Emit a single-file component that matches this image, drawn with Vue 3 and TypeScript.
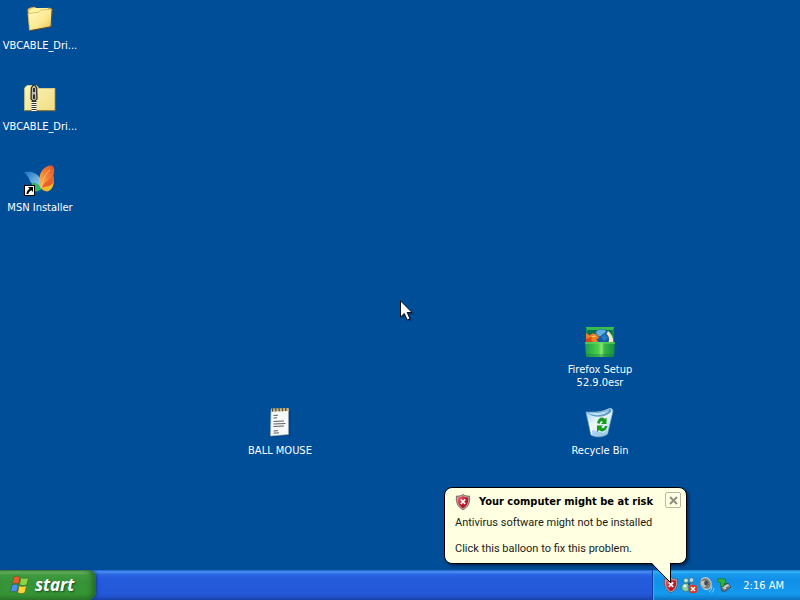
<script setup lang="ts">
import { ref } from 'vue'

type IconKind = 'folder' | 'zip' | 'msn' | 'firefox' | 'bin' | 'notepad'

interface Shortcut {
  kind: IconKind
  label: string
  column: number
  row: number
}

const shortcuts: Shortcut[] = [
  { kind: 'folder', label: 'VBCABLE_Dri...', column: 1, row: 1 },
  { kind: 'zip', label: 'VBCABLE_Dri...', column: 1, row: 2 },
  { kind: 'msn', label: 'MSN Installer', column: 1, row: 3 },
  { kind: 'firefox', label: 'Firefox Setup 52.9.0esr', column: 8, row: 5 },
  { kind: 'notepad', label: 'BALL MOUSE', column: 4, row: 6 },
  { kind: 'bin', label: 'Recycle Bin', column: 8, row: 6 },
]

const balloonOpen = ref(true)
</script>

<template>
  <div class="screen">
    <svg class="defs" width="0" height="0" aria-hidden="true">
      <defs>
        <linearGradient id="gFolder" x1="0" y1="0" x2="1" y2="1">
          <stop offset="0" stop-color="#fffbc4" />
          <stop offset="0.6" stop-color="#fbe88c" />
          <stop offset="1" stop-color="#e5bd58" />
        </linearGradient>
        <linearGradient id="gZip" x1="0" y1="0" x2="1" y2="1">
          <stop offset="0" stop-color="#fdf6b8" />
          <stop offset="1" stop-color="#efdc84" />
        </linearGradient>
        <linearGradient id="gBlueWing" x1="0" y1="0" x2="1" y2="1">
          <stop offset="0" stop-color="#1d6fc0" />
          <stop offset="1" stop-color="#a5dcf5" />
        </linearGradient>
        <linearGradient id="gOrangeWing" x1="0" y1="1" x2="1" y2="0">
          <stop offset="0" stop-color="#ffc24a" />
          <stop offset="0.5" stop-color="#f58232" />
          <stop offset="1" stop-color="#e2502a" />
        </linearGradient>
        <linearGradient id="gBox" x1="0" y1="0" x2="1" y2="0">
          <stop offset="0" stop-color="#1d9c45" />
          <stop offset="0.45" stop-color="#4ed04f" />
          <stop offset="0.55" stop-color="#8be070" />
          <stop offset="0.65" stop-color="#35b548" />
          <stop offset="1" stop-color="#148f45" />
        </linearGradient>
        <linearGradient id="gBin" x1="0" y1="0" x2="1" y2="1">
          <stop offset="0" stop-color="#9fd0ee" />
          <stop offset="0.45" stop-color="#eef9fd" />
          <stop offset="1" stop-color="#a9d3ec" />
        </linearGradient>
        <linearGradient id="gShield" x1="0" y1="0" x2="1" y2="1">
          <stop offset="0" stop-color="#f0767c" />
          <stop offset="0.5" stop-color="#c71a2a" />
          <stop offset="1" stop-color="#96101c" />
        </linearGradient>
        <symbol id="shield" viewBox="0 0 16 16">
          <path d="M8 .5 C10 2 12.500 2.300 14.500 2 C15.300 8 13.500 13 8 15.700 C2.500 13 .7 8 1.500 2 C3.500 2.300 6 2 8 .5Z" fill="#b9aeb0" stroke="#6c4a4e" stroke-width=".8" />
          <path d="M8 2 C9.800 3.200 11.600 3.500 13.200 3.400 C13.600 8.200 12 12 8 14.200 C4 12 2.400 8.200 2.800 3.400 C4.400 3.500 6.200 3.200 8 2Z" fill="url(#gShield)" />
          <path d="M5.800 5.300 L10.200 10 M10.200 5.300 L5.800 10" stroke="#fff" stroke-width="1.800" />
        </symbol>
      </defs>
    </svg>

    <main class="desktop">
      <button
        v-for="(item, index) in shortcuts"
        :key="index"
        type="button"
        class="shortcut"
        :style="{ gridColumn: item.column, gridRow: item.row }"
      >
        <svg class="picture" viewBox="0 0 32 32" aria-hidden="true">
          <g v-if="item.kind === 'folder'">
            <path d="M3.700 8 L4.500 6.500 L8 5.300 L11 5 L13 7 L26.500 6 L26 24 L6 28Z" fill="#efcf73" stroke="#b78a36" stroke-width=".6" />
            <path d="M5 9 L9 6 L24 6 L24 10 L6 13Z" fill="#fff3a4" />
            <path d="M5.500 28.500 L4 11.500 L14.500 10.300 L17 8 L28 7 L27 24.500Z" fill="url(#gFolder)" stroke="#d2a94d" stroke-width=".7" />
            <path d="M5.500 28.800 L27 24.800 L28.200 7.500" fill="none" stroke="#4d4022" stroke-width=".9" />
          </g>
          <g v-else-if="item.kind === 'zip'">
            <path d="M.7 27.500 V5 L3 2.500 H12.500 L15 5.500 H31 V27.500Z" fill="url(#gZip)" stroke="#e8d680" stroke-width=".8" />
            <path d="M1 27.800 H31.300 V6" fill="none" stroke="#66572f" stroke-width="1" />
            <path d="M10 17 V28" stroke="#fff" stroke-width="5" stroke-dasharray="1 1" />
            <path d="M10 18 V28" stroke="#3a3a36" stroke-width="5" stroke-dasharray="1 1" />
            <path d="M7.300 5 Q10 -1 12.700 5 L13 16 Q10 20 7 16Z" fill="#bdbdb5" stroke="#20201c" stroke-width="1.200" />
            <path d="M9 5 H11 V9 H9Z M9 11.500 H11 V16 H9Z" fill="#2e2e2a" />
          </g>
          <g v-else-if="item.kind === 'msn'">
            <path d="M0 8 C6 7 12 8 16 14 C18 18 18 22 17.500 25 C13 23 8 21 6 17 C5 14 3 11 0 8Z" fill="url(#gBlueWing)" />
            <path d="M8 19 C12 18 15 20 17.500 25 C14 28 11 28 9 26Z" fill="#38b56c" />
            <path d="M17 24 C13 15 16 5 24 2 C29 .5 31 3 30 9 C29 15 25 20 17 24Z" fill="url(#gOrangeWing)" />
            <path d="M17 24 C20 18 25 15 29.500 13 C31 20 28 27 23 27.500 C20 27 18 26 17 24Z" fill="#f2b92c" />
            <path d="M17 24 C21 18 25 15 29.700 12 C30.500 18 28.500 21 25 22 C22 22.500 20 23 17 24Z" fill="#e8622a" />
            <path d="M17.500 24 C18 17 21 10 26 6" fill="none" stroke="#ffd59a" stroke-width=".7" />
            <rect x="0" y="21" width="11" height="11" fill="#000" />
            <rect x="1" y="22" width="9" height="9" fill="#fff" />
            <path d="M4 23 H9 V28 L7.300 26.300 C5.500 27.200 4.700 28.500 4.300 30 H2.500 C2.500 27.500 3.500 26 5.700 24.700Z" fill="#000" />
          </g>
          <g v-else-if="item.kind === 'firefox'">
            <rect x="2" y="1" width="28" height="30" rx="1.500" fill="#128a49" />
            <path d="M1.500 1 H30.500 L28 5 H4Z" fill="#38bd4d" />
            <rect x="4" y="4" width="24" height="13" fill="#0d6d56" />
            <circle cx="18" cy="12" r="9" fill="#125aa5" />
            <path d="M12 6 C15 3 19 3 22 5 C21 8 18 8 17 10 C15 11 13 10 12 6Z" fill="#5eaede" />
            <path d="M17 11 L21 8 L24 12 L20 15Z" fill="#247dc2" />
            <path d="M24 5 C28 8 30 13 29 18 H24 C26 13 25 10 22.500 8Z" fill="#f5e6b4" />
            <path d="M2 18 V7 L6 9.500 C8 7 11 7 13 9 L15.500 12 L12.500 13 L15 18Z" fill="#ef7d24" />
            <path d="M2 13 L8 11 L7 14 L11 18 H2Z" fill="#cf4520" />
            <path d="M7 11 L10 9 L12 11Z" fill="#ffd04a" />
            <path d="M1 16 H31 L30 30 Q30 31 29 31 H3 Q2 31 2 30Z" fill="url(#gBox)" />
            <path d="M1 16 H31 V18 H1Z" fill="#65d95e" opacity=".6" />
            <path d="M2 28 H30 V31 H2Z" fill="#096b42" opacity=".3" />
          </g>
          <g v-else-if="item.kind === 'bin'">
            <path d="M2 5 C8 5 17 6 25 1.500 C28 .5 29.500 3 28.500 6 L23.500 27 C20 30 12 31 7 28Z" fill="url(#gBin)" stroke="#7baacb" stroke-width=".7" />
            <path d="M2.500 5.500 C9 5 18 6 25.500 2 C28 2 28 4 26 6 C20 11 9 11 2.500 5.500Z" fill="#5e9ecf" />
            <path d="M3.500 5.800 C10 5.500 18 7 25 3 C21 9 11 9.500 3.500 5.800Z" fill="#c1e2f3" />
            <path d="M4.500 10 L10 28 C8.500 28 7.500 28 7 27Z" fill="#fff" opacity=".7" />
            <path d="M8 23 L20 26 L23 22 L22 28 C17 30 12 30 8 28Z" fill="#78b0d7" opacity=".5" />
            <g fill="#179b1d">
              <path d="M13 16 C14 11 18 9 21 12 L22.500 10.500 V17 H17 L19 15 C17.500 13.500 16 14 15.500 17Z" />
              <path d="M23.500 19 C22 24 18 26 15 23 L13 25 V18.500 H19 L17.300 20.300 C19 22 20.500 21 21 19Z" />
            </g>
          </g>
          <g v-else>
            <path d="M8 4 L25 3 L26.500 4 L26 29 L8 30Z" fill="#07305c" opacity=".45" />
            <path d="M7 3 L24.500 2 L24.500 27.500 L6.500 29Z" fill="#f7f9f7" stroke="#9daab2" stroke-width=".6" />
            <path d="M7 1.500 L24.500 1 V4 L7 4.800Z" fill="#cabb87" />
            <path d="M8 3 L24 2.500" stroke="#4b4532" stroke-width="3" stroke-dasharray="1.200 2.100" />
            <g fill="none" stroke="#586069" stroke-width="1">
              <path d="M9.500 8.500 L14 8.200 M9.500 11 L13 10.800 M9.500 14.500 L20 14 M9.500 17 L21.500 16.500 M9.500 19.500 L20 19 M9.500 24 L14 23.700 M9.500 26.200 L15 25.800" />
            </g>
          </g>
        </svg>
        <span class="caption">{{ item.label }}</span>
      </button>
      <svg class="cursor" viewBox="0 0 14 22" aria-hidden="true">
        <path d="M2 3 V19 L6 15.500 L9 22 L12 20.500 L9 14.500 H14Z" fill="#00204d" opacity=".5" />
        <path d="M.5 .8 V17 L4.300 13.500 L7.200 20 L10 18.800 L7.200 12.500 H12Z" fill="#fff" stroke="#000" stroke-width=".9" />
      </svg>
    </main>

    <footer class="taskbar">
      <button type="button" class="start">
        <svg class="flag" viewBox="0 0 20 20" aria-hidden="true">
          <g stroke="#1c5220" stroke-width=".4">
            <path d="M3.800 2 C6 .7 8 1 10 2 L8.500 9 C6.500 8 4.500 8 2.300 9.200Z" fill="#ee582b" />
            <path d="M11 2.500 C13 3.700 15.500 3.700 18.500 2.500 L16.700 9.700 C13.700 11 11.500 10.800 9.500 9.500Z" fill="#8bd444" />
            <path d="M2 10.300 C4.300 9 6.300 9 8.300 10 L6.700 17 C4.700 16 2.500 16 .3 17.300Z" fill="#4d8cf0" />
            <path d="M9.200 10.500 C11.300 11.800 13.500 11.800 16.500 10.700 L14.800 17.800 C11.800 19 9.700 18.800 7.600 17.500Z" fill="#ffd236" />
          </g>
        </svg>
        <span>start</span>
      </button>
      <div class="tasks"></div>
      <div class="tray">
        <svg class="status" viewBox="0 0 16 16" role="img" aria-label="Security alert"><use href="#shield" /></svg>
        <svg class="status" viewBox="0 0 16 16" role="img" aria-label="Messenger">
          <g stroke="#406b58" stroke-width=".6">
            <circle cx="5" cy="3.500" r="2.300" fill="#c9e9cf" />
            <circle cx="10.500" cy="3" r="2.300" fill="#b9d8ee" />
            <path d="M1 12 C0 7 3 6 6 6.500 C9 7 9 10 7 14 C4 15 2 14 1 12Z" fill="#8dd1a1" />
            <path d="M7 11 C7 6 10 6 12 6 C14 8 14 12 12 14Z" fill="#4f93c8" />
          </g>
          <circle cx="4" cy="9" r="1.300" fill="#fff" />
          <circle cx="8" cy="7" r="1.200" fill="#24506a" />
          <rect x="8" y="8" width="8" height="8" rx="2" fill="#d83422" />
          <path d="M10 10 L14 14 M14 10 L10 14" stroke="#fff" stroke-width="1.500" />
        </svg>
        <svg class="status" viewBox="0 0 16 16" role="img" aria-label="Volume">
          <ellipse cx="7" cy="6.500" rx="5" ry="6" transform="rotate(-25 7 6.500)" fill="#777b7c" stroke="#c9ccc6" stroke-width="1.200" />
          <path d="M1 4 L6 3 L8 9 L5 11 L1.500 8Z" fill="#bfc3c0" stroke="#63696b" stroke-width=".6" />
          <ellipse cx="7" cy="6" rx="1.800" ry="2.500" fill="#43494d" />
          <path d="M10 15 Q13 13 13 9 M13 15.500 Q15 14 15 11" fill="none" stroke="#8bd0ff" stroke-width="1" />
        </svg>
        <svg class="status" viewBox="0 0 16 16" role="img" aria-label="Safely remove hardware">
          <path d="M4 9 L11 6 L14 10 L7.500 14.800 L4.500 13.500Z" fill="#68737b" stroke="#26363e" stroke-width=".6" />
          <path d="M5 10 L11 7 L13 9.500 L7.500 12.500Z" fill="#c5ccca" />
          <path d="M9 11 L12 9.300" stroke="#44545c" stroke-width="1" />
          <path d="M1 1.500 L8.500 2 L9 6.500 L7.300 6.500 L6.500 9.800 L3.500 9 L3.500 5.500 L1 5Z" fill="#2eb33b" stroke="#14742a" stroke-width=".7" />
        </svg>
        <time class="clock">2:16 AM</time>

        <section v-if="balloonOpen" class="balloon" role="status">
          <header class="heading">
            <svg class="status" viewBox="0 0 16 16" aria-hidden="true"><use href="#shield" /></svg>
            <h1>Your computer might be at risk</h1>
            <button type="button" class="close" aria-label="Close" @click="balloonOpen = false">
              <svg viewBox="0 0 9 9" aria-hidden="true"><path d="M1 1 L8 8 M8 1 L1 8" stroke="#8f8e80" stroke-width="2" /></svg>
            </button>
          </header>
          <p>Antivirus software might not be installed</p>
          <p>Click this balloon to fix this problem.</p>
          <svg class="tail" viewBox="0 0 22 22" aria-hidden="true">
            <path d="M0 0 H20 V21Z" fill="#ffffe1" />
            <path d="M0 1 L19.500 20.500 V1" fill="none" stroke="#000" stroke-width="1" />
          </svg>
        </section>
      </div>
    </footer>
  </div>
</template>

<style>
body {
  margin: 0;
}
</style>

<style scoped>
.screen {
  display: flex;
  flex-direction: column;
  min-height: 100vh;
  overflow: hidden;
  background: #004e98;
  font-family: "DejaVu Sans Condensed", "Noto Sans", sans-serif;
  font-size: 11px;
  line-height: 13px;
}

button {
  margin: 0;
  padding: 0;
  border: 0;
  background: none;
  color: inherit;
  font: inherit;
}

.defs {
  position: absolute;
}

.desktop {
  position: relative;
  flex: 1;
  display: grid;
  grid-template-columns: repeat(auto-fill, 80px);
  grid-auto-rows: 81px;
  padding-top: 2px;
}

.shortcut {
  display: flex;
  flex-direction: column;
  align-items: center;
  gap: 5px;
  color: #fff;
}

.picture {
  width: 32px;
  height: 32px;
}

.caption {
  max-width: 76px;
  text-align: center;
}

.cursor {
  position: absolute;
  left: 50%;
  top: 300px;
  width: 14px;
  height: 22px;
}

.taskbar {
  display: flex;
  height: 30px;
  background: linear-gradient(#1f5fd0 0, #4d93f5 2px, #2b69e4 4px, #245bdc 8px, #2359d8 24px, #1d4bbd 28px, #1941a5 30px);
}

.start {
  display: flex;
  align-items: center;
  gap: 5px;
  width: 96px;
  padding-left: 10px;
  border-radius: 0 8px 8px 0;
  background: linear-gradient(#3f8a41 0, #6fba6c 2px, #3f9a40 5px, #379337 12px, #359435 24px, #2c7d2c 30px);
  box-shadow: inset -4px 0 5px #276b27, 1px 0 3px #163a96;
  color: #fff;
  font: italic bold 17px/28px "Noto Sans", "Open Sans", sans-serif;
  text-shadow: 1px 1px 2px #1b4a1b;
}

.flag {
  width: 20px;
  height: 20px;
}

.tasks {
  flex: 1;
}

.tray {
  position: relative;
  display: flex;
  align-items: center;
  gap: 2px;
  padding: 0 16px 0 10px;
  border-left: 1px solid #0b3fa8;
  background: linear-gradient(#1577d2 0, #32b7f5 2px, #1a9bee 4px, #128fe8 10px, #149aee 24px, #0f80d2 28px, #0d6ab8 30px);
  box-shadow: inset 1px 0 1px #2cb6f4;
  color: #fff;
}

.status {
  flex: none;
  width: 16px;
  height: 16px;
}

.clock {
  padding-left: 8px;
}

.balloon {
  position: absolute;
  right: 113px;
  bottom: 36px;
  box-sizing: border-box;
  width: 243px;
  padding: 4px 5px 8px 10px;
  border: 1px solid #000;
  border-radius: 8px;
  background: #ffffe1;
  box-shadow: 2px 2px 3px rgba(0, 10, 40, 0.55);
  color: #1c1c16;
}

.heading {
  display: flex;
  align-items: center;
  gap: 8px;
}

.heading h1 {
  flex: 1;
  margin: 0;
  font-size: 11px;
  font-weight: bold;
  line-height: 19px;
  white-space: nowrap;
  color: #000;
}

.close {
  display: grid;
  place-items: center;
  align-self: flex-start;
  box-sizing: border-box;
  width: 16px;
  height: 16px;
  border: 1px solid #b9b8a6;
  border-radius: 2px;
}

.close svg {
  width: 9px;
  height: 9px;
}

.balloon p {
  margin: 5px 0 0;
  font-family: Roboto, "Liberation Sans", sans-serif;
  white-space: nowrap;
}

.balloon p + p {
  margin-top: 13px;
}

.tail {
  position: absolute;
  right: 13px;
  top: 100%;
  width: 22px;
  height: 22px;
  margin-top: -1px;
}
</style>
